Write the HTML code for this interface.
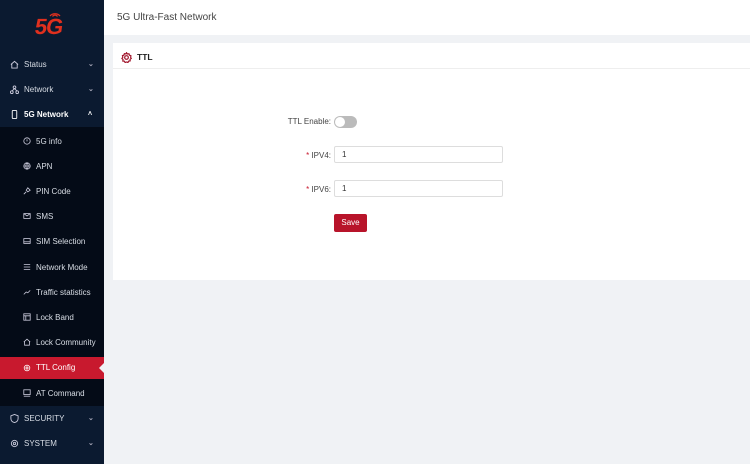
<!DOCTYPE html>
<html><head><meta charset="utf-8"><style>
*{margin:0;padding:0;box-sizing:border-box}
body{width:750px;height:464px;overflow:hidden;background:#f0f2f5;font-family:"Liberation Sans",sans-serif;position:relative}
.side{position:absolute;left:0;top:0;width:104px;height:464px;background:#0b1a30}
.logo{position:absolute;left:35px;top:14px;color:#e0301e;font-weight:bold;font-size:22px;letter-spacing:-1px;transform:skewX(-8deg)}
.it{position:absolute;left:0;width:104px;height:25px;color:#d8dde5;font-size:8px;line-height:25px}
.it svg{position:absolute;top:8px}
.top svg{left:10px}.top span{position:absolute;left:24px}
.top .ar{position:absolute;left:88px;top:0;font-size:7px;color:#aab}
.sub{position:absolute;left:0;top:127px;width:104px;height:279px;background:#040b17}
.sub .it svg{left:23px}.sub .it span{position:absolute;left:36px}
.act{background:#c8192e;color:#fff}
.hdr{position:absolute;left:104px;top:0;width:646px;height:35px;background:#fff;color:#444;font-size:10px;line-height:35px;padding-left:13px}
.card{position:absolute;left:113px;top:43px;width:637px;height:237px;background:#fff}
.ch{height:26px;border-bottom:1px solid #eee;font-size:8.5px;font-weight:bold;color:#222;line-height:28px;padding-left:24px;position:relative}
.lab{position:absolute;font-size:8px;color:#444;text-align:right;width:100px;white-space:nowrap}
.inp{position:absolute;width:169px;height:17px;border:1px solid #ddd;border-radius:2px;font-size:8px;line-height:15px;padding-left:7px;color:#333;background:#fff}
</style></head><body>
<div class="side">
<svg width="14" height="7" viewBox="0 0 14 7" style="position:absolute;left:48px;top:10px" fill="none" stroke="#e0301e" stroke-width="1.3"><path d="M2 6a6 5 0 0 1 10 0M4.5 6.5a3 3 0 0 1 5 0"/></svg>
<div class="logo">5G</div>
<div class="it top" style="top:52px"><svg width="9" height="9" viewBox="0 0 10 10" fill="none" stroke="#ccd" stroke-width="1"><path d="M1 5L5 1.5 9 5M2 4.5V9h6V4.5"/></svg><span>Status</span><b class="ar">⌄</b></div>
<div class="it top" style="top:77px"><svg width="9" height="9" viewBox="0 0 10 10" fill="none" stroke="#ccd" stroke-width="1"><circle cx="5" cy="2.5" r="1.5"/><circle cx="2" cy="8" r="1.5"/><circle cx="8" cy="8" r="1.5"/><path d="M5 4L2.5 6.5M5 4l2.5 2.5"/></svg><span>Network</span><b class="ar">⌄</b></div>
<div class="it top" style="top:102px;color:#fff;font-weight:bold"><svg width="9" height="9" viewBox="0 0 10 10" fill="none" stroke="#fff" stroke-width="1"><rect x="2.5" y="0.5" width="5" height="9" rx="1"/></svg><span>5G Network</span><b class="ar" style="color:#fff">˄</b></div>
<div class="sub"></div>
<div class="it top" style="top:406px"><svg width="9" height="9" viewBox="0 0 10 10" fill="none" stroke="#ccd" stroke-width="1"><path d="M5 .5L9 2v3c0 2.5-2 4-4 4.5C3 9 1 7.5 1 5V2z"/></svg><span>SECURITY</span><b class="ar">⌄</b></div>
<div class="it top" style="top:431px"><svg width="9" height="9" viewBox="0 0 10 10" fill="none" stroke="#ccd" stroke-width="1"><circle cx="5" cy="5" r="3.5"/><circle cx="5" cy="5" r="1.3"/></svg><span>SYSTEM</span><b class="ar">⌄</b></div>
<div class="sub" style="background:none">
<div class="it" style="top:2px"><svg width="8" height="8" viewBox="0 0 10 10" fill="none" stroke="#ccd"><circle cx="5" cy="5" r="4"/><path d="M5 3v2.5"/></svg><span>5G info</span></div>
<div class="it" style="top:27px"><svg width="8" height="8" viewBox="0 0 10 10" fill="none" stroke="#ccd"><circle cx="5" cy="5" r="4"/><path d="M1 5h8M5 1c2 2 2 6 0 8M5 1c-2 2-2 6 0 8"/></svg><span>APN</span></div>
<div class="it" style="top:52px"><svg width="8" height="8" viewBox="0 0 10 10" fill="none" stroke="#ccd"><path d="M6 1l3 3-3 2-2-2zM4 6L1 9"/></svg><span>PIN Code</span></div>
<div class="it" style="top:77px"><svg width="8" height="8" viewBox="0 0 10 10" fill="none" stroke="#ccd"><rect x="1" y="2" width="8" height="6"/><path d="M1 2l4 3 4-3"/></svg><span>SMS</span></div>
<div class="it" style="top:102px"><svg width="8" height="8" viewBox="0 0 10 10" fill="none" stroke="#ccd"><rect x="1" y="2" width="8" height="6"/><path d="M1 6h8"/></svg><span>SIM Selection</span></div>
<div class="it" style="top:128px"><svg width="8" height="8" viewBox="0 0 10 10" fill="none" stroke="#ccd"><path d="M1 2h8M1 5h8M1 8h8"/></svg><span>Network Mode</span></div>
<div class="it" style="top:153px"><svg width="8" height="8" viewBox="0 0 10 10" fill="none" stroke="#ccd"><path d="M1 8l3-3 2 1 3-3"/></svg><span>Traffic statistics</span></div>
<div class="it" style="top:178px"><svg width="8" height="8" viewBox="0 0 10 10" fill="none" stroke="#ccd"><rect x="1" y="1" width="8" height="8"/><path d="M1 3.5h8M3.5 3.5V9"/></svg><span>Lock Band</span></div>
<div class="it" style="top:203px"><svg width="8" height="8" viewBox="0 0 10 10" fill="none" stroke="#ccd"><path d="M1 5L5 1.5 9 5M2 4.5V9h6V4.5"/></svg><span>Lock Community</span></div>
<div class="it act" style="top:230px;height:22px;line-height:22px"><svg width="8" height="8" viewBox="0 0 10 10" fill="none" stroke="#fff" style="top:7px"><circle cx="5" cy="5" r="3.5"/><circle cx="5" cy="5" r="1.3"/></svg><span>TTL Config</span><div style="position:absolute;right:0;top:6px;width:0;height:0;border:5px solid transparent;border-right-color:#f0f2f5"></div></div>
<div class="it" style="top:254px"><svg width="8" height="8" viewBox="0 0 10 10" fill="none" stroke="#ccd"><rect x="1" y="1" width="8" height="6"/><path d="M1 9h8"/></svg><span>AT Command</span></div>
</div>
</div>
<div class="hdr">5G Ultra-Fast Network</div>
<div class="card">
<div class="ch"><svg width="11" height="11" viewBox="0 0 12 12" style="position:absolute;left:8px;top:9px" fill="none" stroke="#a0142a" stroke-width="1.3"><path d="M6 .8l1 1.4 1.7-.3.5 1.6 1.6.6-.3 1.7L11.2 7l-1.3 1 .1 1.7-1.7.3-.7 1.5-1.6-.6L4.5 11.5l-.8-1.5-1.7-.1.2-1.7L1 7l1-1.3L1.6 4l1.6-.6.5-1.6 1.7.3z"/><circle cx="6" cy="6" r="2"/></svg>TTL</div>
<div class="lab" style="left:118px;top:74px">TTL Enable:</div>
<div style="position:absolute;left:221px;top:73px;width:23px;height:12px;border-radius:6px;background:#bbb"><div style="position:absolute;left:1px;top:1px;width:10px;height:10px;border-radius:50%;background:#fff"></div></div>
<div class="lab" style="left:118px;top:108px"><span style="color:#c8192e">*</span> IPV4:</div>
<div class="inp" style="left:221px;top:103px">1</div>
<div class="lab" style="left:118px;top:142px"><span style="color:#c8192e">*</span> IPV6:</div>
<div class="inp" style="left:221px;top:137px">1</div>
<div style="position:absolute;left:221px;top:171px;width:33px;height:18px;background:#b8142a;border-radius:2px;color:#fff;font-size:8px;line-height:18px;text-align:center">Save</div>
</div>
</body></html>
